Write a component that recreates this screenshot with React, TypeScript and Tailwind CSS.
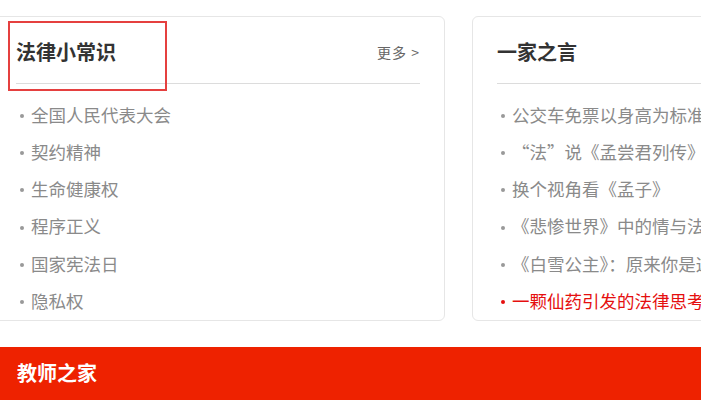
import React from 'react';

const font = { fontFamily: '"Microsoft YaHei", "Noto Sans CJK SC", "Noto Sans", sans-serif' };

interface Item {
  text: string;
  hot?: boolean;
}

const lawTips: Item[] = [
  { text: '全国人民代表大会' },
  { text: '契约精神' },
  { text: '生命健康权' },
  { text: '程序正义' },
  { text: '国家宪法日' },
  { text: '隐私权' },
];

const opinions: Item[] = [
  { text: '公交车免票以身高为标准是否合理' },
  { text: '“法”说《孟尝君列传》' },
  { text: '换个视角看《孟子》' },
  { text: '《悲惨世界》中的情与法' },
  { text: '《白雪公主》：原来你是这样的皇后' },
  { text: '一颗仙药引发的法律思考', hot: true },
];

function Card({ title, items, more }: { title: string; items: Item[]; more?: boolean }) {
  return (
    <div className="w-[454px] shrink-0 bg-white border border-[#e6e6e6] rounded-md px-6">
      {/* Header */}
      <div className="flex items-center justify-between pt-[21px] pb-[17px] border-b border-[#dcdcdc]">
        <h2 className="text-[20px] leading-[28px] font-bold text-[#333]">{title}</h2>
        {more && <a className="text-[14px] text-[#666] tracking-[1px]">更多 &gt;</a>}
      </div>

      {/* List */}
      <ul className="pt-[12px]">
        {items.map((it) => (
          <li
            key={it.text}
            className={`flex items-center pl-1 h-[37.3px] text-[17.5px] whitespace-nowrap ${it.hot ? 'text-[#e50f0f]' : 'text-[#8a8a8a]'}`}
          >
            <span className={`w-1 h-1 rounded-full mr-[7px] mt-[2px] shrink-0 ${it.hot ? 'bg-[#e50f0f]' : 'bg-[#999]'}`} />
            {it.text}
          </li>
        ))}
      </ul>
    </div>
  );
}

export default function App() {
  return (
    <div className="relative w-[701px] h-[400px] overflow-hidden bg-white" style={font}>
      <div className="flex gap-[27px] pt-4 ml-[-9px]">
        <Card title="法律小常识" items={lawTips} more />
        <Card title="一家之言" items={opinions} />
      </div>

      {/* Section bar */}
      <div className="mt-[26px] h-[60px] bg-[#ee2200] px-[17px] pt-[12px]">
        <h2 className="text-[20px] leading-[28px] font-bold text-white">教师之家</h2>
      </div>

      {/* Highlight overlay */}
      <div className="absolute left-[8px] top-[21px] w-[159px] h-[70px] border-2 border-[#e5403f]" />
    </div>
  );
}
